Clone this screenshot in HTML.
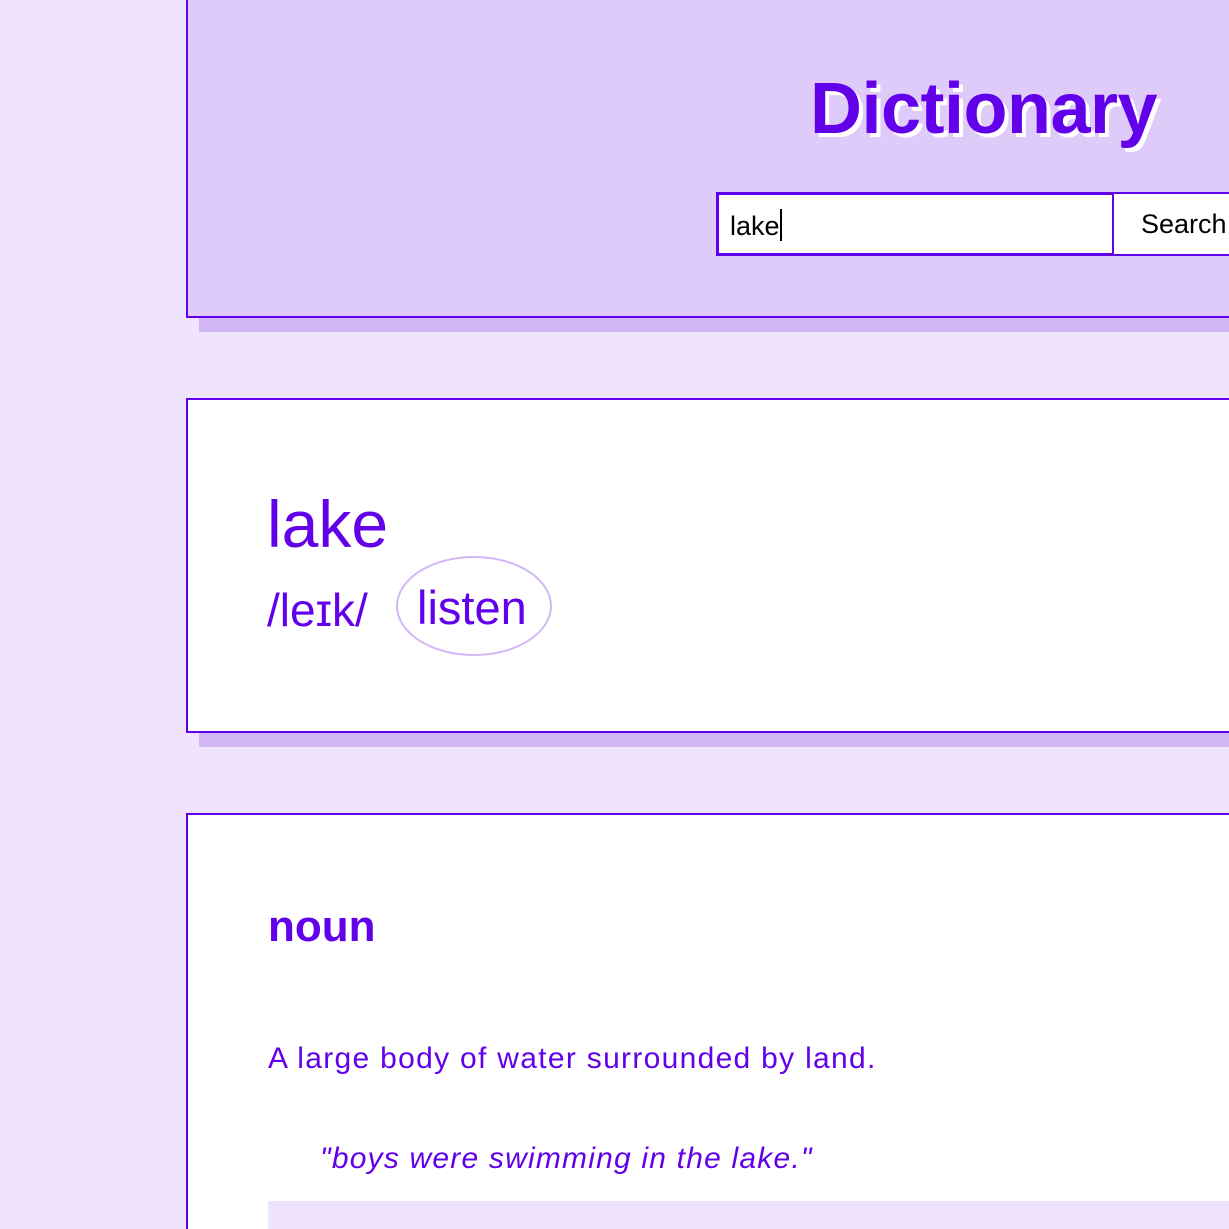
<!DOCTYPE html>
<html><head><meta charset="utf-8">
<style>
html,body{margin:0;padding:0;width:1229px;height:1229px;overflow:hidden;background:#efe3fd;font-family:"Liberation Sans","DejaVu Sans",sans-serif;color:#6200ea}
.box{position:absolute;left:186px;width:1100px;border:2px solid #6200ea;box-shadow:13px 14px 0 #d3b6f6;box-sizing:border-box}
.hdr{top:-10px;height:328px;background:#dfcbfa}
.c2{top:398px;height:335px;background:#fff}
.c3{top:813px;height:416px;background:#fff;border-bottom:none;box-shadow:none}
.abs{position:absolute;white-space:nowrap}
</style></head><body>
<div class="box hdr"></div>
<div class="abs" style="left:810px;top:68px;font-size:72px;font-weight:bold;text-shadow:4px 4px 0 #fff;letter-spacing:-0.5px">Dictionary</div>
<div class="abs" style="left:716px;top:192px;width:399px;height:64px;box-sizing:border-box;border:3px solid #6200ea;background:#fff"></div>
<div class="abs" style="left:730px;top:209px;font-size:27px;color:#000">lake<span style="display:inline-block;width:2px;height:32px;background:#000;vertical-align:-6px"></span></div>
<div class="abs" style="left:1114px;top:192px;width:200px;height:64px;box-sizing:border-box;border:2px solid #6200ea;border-left:none;background:#fff"></div>
<div class="abs" style="left:1141px;top:209px;font-size:27px;color:#000">Search</div>

<div class="box c2"></div>
<div class="abs" style="left:267px;top:486px;font-size:66px">lake</div>
<div class="abs" style="left:267px;top:583px;font-size:46px">/leɪk/</div>
<div class="abs" style="left:396px;top:556px;width:156px;height:100px;box-sizing:border-box;border:2px solid #d3b6f6;border-radius:50%"></div>
<div class="abs" style="left:417px;top:580px;font-size:47px">listen</div>

<div class="box c3"></div>
<div class="abs" style="left:268px;top:902px;font-size:44px;font-weight:bold">noun</div>
<div class="abs" style="left:268px;top:1042px;font-size:30px;letter-spacing:1.3px">A large body of water surrounded by land.</div>
<div class="abs" style="left:320px;top:1142px;font-size:30px;font-style:italic;letter-spacing:1.2px">"boys were swimming in the lake."</div>
<div class="abs" style="left:268px;top:1201px;width:1000px;height:28px;background:#efe3fd"></div>
</body></html>
